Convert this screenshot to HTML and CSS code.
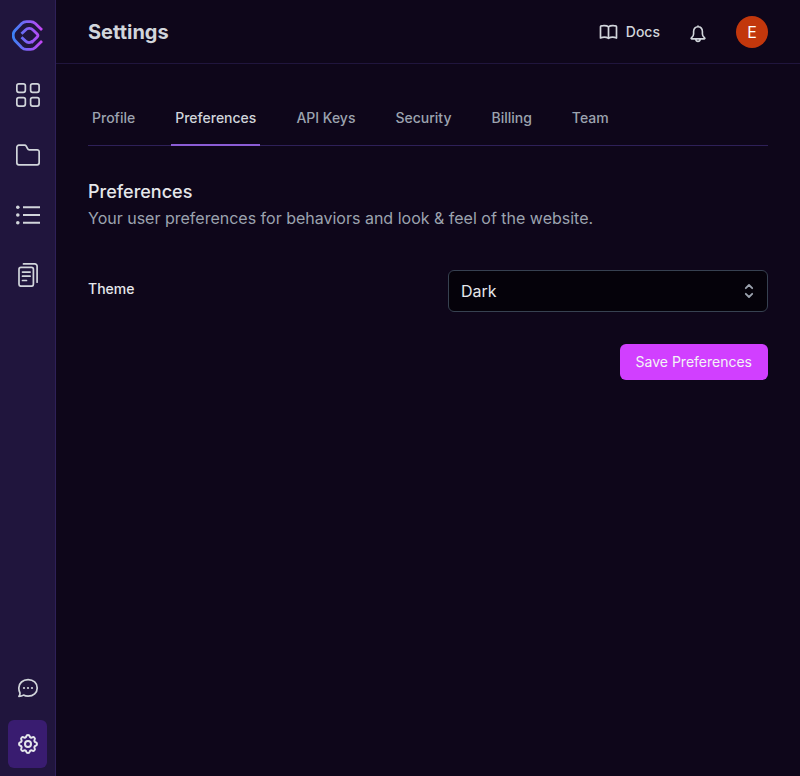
FILE: index.html
```html
<!DOCTYPE html>
<html lang="en">
<head>
  <meta charset="utf-8">
  <meta name="viewport" content="width=device-width, initial-scale=1">
  <title>Settings</title>
  <link rel="stylesheet" href="styles.css">
</head>
<body>
  <div class="app">
    <aside class="sidebar">
      <a class="logo" href="#" aria-label="Home">
        <svg width="32" height="32" viewBox="0 0 32 32" fill="none" stroke="url(#brand)" stroke-width="2.800">
          <defs>
            <linearGradient id="brand" gradientUnits="userSpaceOnUse" x1="1" y1="16" x2="31" y2="16">
              <stop offset="0" stop-color="#3b82f6"/>
              <stop offset="0.55" stop-color="#8b5cf6"/>
              <stop offset="1" stop-color="#c944f5"/>
            </linearGradient>
          </defs>
          <path d="M30 10 23.300 3.600Q21.300 1.700 18.500 1.700H14.500Q11.700 1.700 9.700 3.600L3.200 10.200Q.200 13.200 1.600 17.800 2 19.300 3.200 20.800L9.700 27.400Q11.700 29.300 14.500 29.300H18.500Q21.300 29.300 23.300 27.400L30 21"/>
          <path d="M9.500 13.800 13.500 9.900Q15 8.400 17 8.400H17.500Q19.500 8.400 21 9.900L25.200 14Q26.700 15.500 25.200 17L19.300 22.800"/>
          <path d="M9.500 17.200 13.500 21.100Q15 22.600 17 22.600 19 22.600 20.500 21.100"/>
        </svg>
      </a>
      <nav class="side-main" aria-label="Main">
        <a class="side-link" href="#" aria-label="Dashboard">
          <svg width="24" height="24" viewBox="0 0 24 24" fill="none" stroke="currentColor" stroke-width="1.700">
            <rect x=".85" y=".85" width="8.500" height="8.500" rx="2"/><rect x="14.600" y=".85" width="8.500" height="8.500" rx="2"/>
            <rect x=".85" y="14.600" width="8.500" height="8.500" rx="2"/><rect x="14.600" y="14.600" width="8.500" height="8.500" rx="2"/>
          </svg>
        </a>
        <a class="side-link" href="#" aria-label="Projects">
          <svg width="24" height="24" viewBox="0 0 24 24" fill="none" stroke="currentColor" stroke-width="1.700" stroke-linejoin="round">
            <path d="M.85 19.800V4.200a2 2 0 0 1 2-2h5.700a2 2 0 0 1 1.700 1l1.300 2.500a2 2 0 0 0 1.800 1.100h7.800a2 2 0 0 1 2 2v11a2 2 0 0 1-2 2H2.850a2 2 0 0 1-2-2z"/>
          </svg>
        </a>
        <a class="side-link" href="#" aria-label="List">
          <svg width="24" height="24" viewBox="0 0 24 24" fill="none" stroke="currentColor" stroke-width="1.900">
            <path d="M7 4.300h17M7 12h17M7 19.700h17"/>
            <g fill="currentColor" stroke="none"><circle cx="1.800" cy="4.300" r="1.800"/><circle cx="1.800" cy="12" r="1.800"/><circle cx="1.800" cy="19.700" r="1.800"/></g>
          </svg>
        </a>
        <a class="side-link" href="#" aria-label="Documents">
          <svg width="24" height="24" viewBox="0 0 24 24" fill="none" stroke="currentColor" stroke-width="1.700" stroke-linecap="round">
            <rect x="3" y="4.300" width="14.400" height="18.900" rx="2"/>
            <path d="M7.500.9h11.300a2.300 2.300 0 0 1 2.300 2.300v16M6.500 9.100h7.600M6.500 13.200h7.600M6.500 17.500h4"/>
          </svg>
        </a>
      </nav>
      <nav class="side-foot" aria-label="Support">
        <a class="side-link" href="#" aria-label="Feedback">
          <svg width="24" height="24" viewBox="0 0 24 24" fill="none" stroke="currentColor" stroke-width="1.700" stroke-linejoin="round">
            <path d="M2.900 20.300c.9-.9 1.200-2 1.100-3.300-.8-1.400-1.200-3-1.200-5C2.800 7.200 6.800 3.600 12.100 3.600s9.100 3.500 9.100 8.300-3.800 8.300-9.100 8.300c-1.700 0-3.200-.3-4.600-1.100-1.200.8-2.800 1.200-4.600 1.200z"/>
            <g fill="currentColor" stroke="none"><circle cx="8" cy="12" r="1.100"/><circle cx="12" cy="12" r="1.100"/><circle cx="16" cy="12" r="1.100"/></g>
          </svg>
        </a>
        <a class="side-link current" href="#" aria-label="Settings" aria-current="page">
          <svg width="24" height="24" viewBox="0 0 24 24" fill="none" stroke="currentColor" stroke-width="2" stroke-linejoin="round">
            <path d="M10.325 4.317c.426-1.756 2.924-1.756 3.350 0a1.724 1.724 0 0 0 2.573 1.066c1.543-.94 3.310.826 2.370 2.370a1.724 1.724 0 0 0 1.065 2.572c1.756.426 1.756 2.924 0 3.350a1.724 1.724 0 0 0-1.066 2.573c.94 1.543-.826 3.310-2.370 2.370a1.724 1.724 0 0 0-2.572 1.065c-.426 1.756-2.924 1.756-3.350 0a1.724 1.724 0 0 0-2.573-1.066c-1.543.94-3.310-.826-2.370-2.370a1.724 1.724 0 0 0-1.065-2.572c-1.756-.426-1.756-2.924 0-3.350a1.724 1.724 0 0 0 1.066-2.573c-.94-1.543.826-3.310 2.370-2.370.996.608 2.296.070 2.572-1.065z"/>
            <circle cx="12" cy="12" r="3"/>
          </svg>
        </a>
      </nav>
    </aside>

    <div class="page">
      <header class="topbar">
        <h1>Settings</h1>
        <div class="top-actions">
          <a class="docs" href="#">
            <svg width="20" height="20" viewBox="0 0 20 20" fill="none" stroke="currentColor" stroke-width="1.700" stroke-linecap="round" stroke-linejoin="round">
              <path d="M10.500 4.800C9.200 3.700 7.400 3.400 5.300 3.600 3.700 3.700 2.500 4 2.500 4.800V16c2.400-1 5.800-1 8 .3 2.200-1.300 5.600-1.300 8-.3V4.800c0-.8-1.200-1.100-2.800-1.200-2.100-.2-3.900.1-5.200 1.200zM10.500 4.800v11.500"/>
            </svg>
            Docs
          </a>
          <button class="bell" type="button" aria-label="Notifications">
            <svg width="20" height="20" viewBox="0 0 20 20" fill="none" stroke="currentColor" stroke-width="1.600" stroke-linecap="round" stroke-linejoin="round">
              <path d="M10 2.800C7.200 2.800 5.600 4.800 5.600 7.600V10c0 1.700-1 3-2.300 4-.4.400-.2.900.3.900h12.800c.5 0 .7-.5.300-.9-1.300-1-2.300-2.300-2.300-4V7.600c0-2.800-1.600-4.800-4.400-4.800zM10 2v.8M7.700 15.200c.2 1.400 1.100 2.200 2.300 2.200s2.100-.8 2.300-2.200"/>
            </svg>
          </button>
          <button class="avatar" type="button" aria-label="Account">E</button>
        </div>
      </header>

      <main class="content">
        <nav class="tabs" aria-label="Settings sections">
          <a class="tab" href="#">Profile</a>
          <a class="tab selected" href="#" aria-current="page">Preferences</a>
          <a class="tab" href="#">API Keys</a>
          <a class="tab" href="#">Security</a>
          <a class="tab" href="#">Billing</a>
          <a class="tab" href="#">Team</a>
        </nav>
        <form class="preferences">
          <h2>Preferences</h2>
          <p>Your user preferences for behaviors and look &amp; feel of the website.</p>
          <div class="field">
            <label for="theme">Theme</label>
            <div class="picker">
              <select id="theme">
                <option>Dark</option>
              </select>
              <svg class="chevrons" width="20" height="20" viewBox="0 0 20 20" fill="none" stroke="currentColor" stroke-width="1.800" stroke-linecap="round" stroke-linejoin="round">
                <path d="m6.800 7.200 3.200-3.200 3.200 3.200M6.800 12.800l3.200 3.200 3.200-3.200"/>
              </svg>
            </div>
          </div>
          <div class="actions">
            <button class="save" type="button">Save Preferences</button>
          </div>
        </form>
      </main>
    </div>
  </div>
</body>
</html>
```
FILE: styles.css
```css
* {
  box-sizing: border-box;
}

body {
  margin: 0;
  background: #0e061a;
  color: #e5e7eb;
  font: 16px/24px Inter, "Liberation Sans", sans-serif;
}

a {
  color: inherit;
  text-decoration: none;
}

button,
select {
  font: inherit;
  border: 0;
  cursor: pointer;
}

h1,
h2,
p {
  margin: 0;
}

svg {
  display: block;
}

.app {
  display: flex;
  min-height: 100vh;
}

.sidebar {
  display: flex;
  flex-direction: column;
  flex: none;
  width: 56px;
  padding: 20px 8px 8px;
  background: #20153d;
  border-right: 1px solid #2e2058;
  color: #d1d5db;
}

.logo {
  display: flex;
  justify-content: center;
  margin-bottom: 19px;
}

.logo svg,
.side-link svg {
  flex: none;
}

.side-main,
.side-foot {
  display: flex;
  flex-direction: column;
  gap: 12px;
}

.side-foot {
  gap: 8px;
  margin-top: auto;
}

.side-link {
  display: flex;
  align-items: center;
  justify-content: center;
  height: 48px;
  border-radius: 6px;
}

.current {
  background: #391c70;
  color: #e5e7eb;
}

.page {
  flex: 1;
  min-width: 0;
}

.topbar {
  display: flex;
  align-items: center;
  justify-content: space-between;
  height: 64px;
  padding: 0 32px;
  border-bottom: 1px solid #20153d;
}

h1 {
  color: #d1d5db;
  font-size: 20px;
  line-height: 28px;
  font-weight: 700;
}

.top-actions {
  display: flex;
  align-items: center;
  color: #d1d5db;
}

.docs {
  display: flex;
  align-items: center;
  gap: 8px;
  font-size: 14px;
  font-weight: 500;
}

.bell {
  margin: 4px 28px 0;
  padding: 0;
  background: none;
  color: inherit;
}

.avatar {
  width: 32px;
  height: 32px;
  padding: 0;
  border-radius: 50%;
  background: #c2370c;
  color: #fff;
}

.content {
  padding: 28px 32px;
}

.tabs {
  display: flex;
  gap: 32px;
  border-bottom: 1px solid #2e2058;
}

.tab {
  margin-bottom: -1px;
  padding: 16px 4px;
  border-bottom: 2px solid transparent;
  color: #9ca3af;
  font-size: 14px;
  line-height: 20px;
  font-weight: 500;
}

.selected {
  border-color: #8b5cd6;
  color: #d1d5db;
}

.preferences {
  padding-top: 34px;
}

h2 {
  font-size: 18px;
  line-height: 24px;
  font-weight: 500;
}

p {
  margin-top: 2px;
  color: #9ca3af;
}

.field {
  display: grid;
  grid-template-columns: 1fr 320px;
  margin-top: 40px;
}

.field label {
  padding-top: 7px;
  font-size: 14px;
  font-weight: 500;
}

.picker {
  display: grid;
  align-items: center;
  position: relative;
}

.picker select {
  appearance: none;
  width: 100%;
  height: 42px;
  padding: 0 40px 0 12px;
  border: 1px solid #374151;
  border-radius: 6px;
  background: #05020a;
  color: #e5e7eb;
}

.chevrons {
  position: absolute;
  right: 9px;
  color: #9ca3af;
  pointer-events: none;
}

.actions {
  display: flex;
  justify-content: flex-end;
  margin-top: 32px;
}

.save {
  padding: 8px 16px;
  border-radius: 6px;
  background: #d13fff;
  color: #f3f4f6;
  font-size: 14px;
  line-height: 20px;
}
```
